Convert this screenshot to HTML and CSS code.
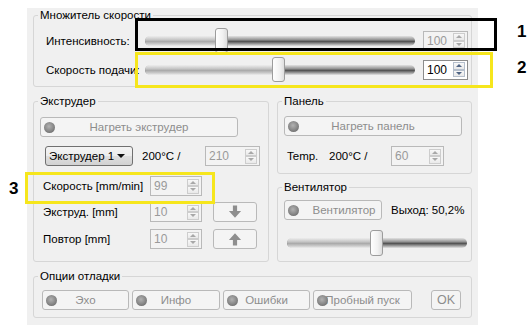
FILE: index.html
```html
<!DOCTYPE html>
<html lang="ru">
<head>
  <meta charset="UTF-8" />
  <meta name="viewport" content="width=device-width, initial-scale=1.0" />
  <title>Управление принтером</title>
  <link rel="stylesheet" href="styles.css">
</head>
<body>
  <div class="screen">
    <div class="window">
      <!-- Множитель скорости -->
      <fieldset class="group">
        <legend>Множитель скорости</legend>
        <div class="speed-body">
          <div class="speed-row">
            <span class="speed-label">Интенсивность:</span>
            <div class="slider wide">
              <div class="track"><div class="fill" style="width:75px"></div></div>
              <div class="thumb" style="left:70px"></div>
            </div>
            <div class="spin small"><span>100</span><span class="arrows"><i></i><i></i></span></div>
          </div>
          <div class="speed-row">
            <span class="speed-label">Скорость подачи:</span>
            <div class="slider wide">
              <div class="track"><div class="fill" style="width:132px"></div></div>
              <div class="thumb" style="left:127px"></div>
            </div>
            <div class="spin small on"><span>100</span><span class="arrows"><i></i><i></i></span></div>
          </div>
        </div>
      </fieldset>

      <div class="columns">
        <!-- Экструдер -->
        <fieldset class="group extruder">
          <legend>Экструдер</legend>
          <div class="ext-body">
            <div class="btn heat-ext"><span class="led"></span>Нагреть экструдер</div>
            <div class="ext-row">
              <div class="combo">Экструдер 1</div>
              <span class="temp-label">200°C /</span>
              <div class="spin w55"><span>210</span><span class="arrows"><i></i><i></i></span></div>
            </div>
            <div class="param-row first">
              <span class="param-label">Скорость [mm/min]</span>
              <div class="spin w52"><span>99</span><span class="arrows"><i></i><i></i></span></div>
            </div>
            <div class="param-row second">
              <span class="param-label">Экструд. [mm]</span>
              <div class="spin w52"><span>10</span><span class="arrows"><i></i><i></i></span></div>
              <div class="btn arrow-btn">
                <svg width="14" height="14" viewBox="0 0 12 12"><path d="M4.2 0.5h3.6v4.7h3.4L6 11 0.8 5.2h3.4z" fill="#8e8e8e"/></svg>
              </div>
            </div>
            <div class="param-row third">
              <span class="param-label">Повтор [mm]</span>
              <div class="spin w52"><span>10</span><span class="arrows"><i></i><i></i></span></div>
              <div class="btn arrow-btn">
                <svg width="14" height="14" viewBox="0 0 12 12"><path d="M4.2 11.5h3.6V6.8h3.4L6 1 0.8 6.8h3.4z" fill="#8e8e8e"/></svg>
              </div>
            </div>
          </div>
        </fieldset>

        <div class="right-col">
          <!-- Панель -->
          <fieldset class="group">
            <legend>Панель</legend>
            <div class="panel-body">
              <div class="btn heat-panel"><span class="led"></span>Нагреть панель</div>
              <div class="panel-row">
                <span class="temp-name">Temp.</span>
                <span class="temp-value">200°C /</span>
                <div class="spin w53"><span>60</span><span class="arrows"><i></i><i></i></span></div>
              </div>
            </div>
          </fieldset>

          <!-- Вентилятор -->
          <fieldset class="group fan">
            <legend>Вентилятор</legend>
            <div class="fan-body">
              <div class="fan-row">
                <div class="btn fan-btn"><span class="led"></span>Вентилятор</div>
                <span class="fan-out">Выход: 50,2%</span>
              </div>
              <div class="slider narrow">
                <div class="track"><div class="fill" style="width:88px"></div></div>
                <div class="thumb tall" style="left:83px"></div>
              </div>
            </div>
          </fieldset>
        </div>
      </div>

      <!-- Опции отладки -->
      <fieldset class="group debug">
        <legend>Опции отладки</legend>
        <div class="debug-body">
          <div class="btn w87"><span class="led"></span>Эхо</div>
          <div class="btn w88"><span class="led"></span>Инфо</div>
          <div class="btn w87"><span class="led"></span>Ошибки</div>
          <div class="btn w99"><span class="led"></span>Пробный пуск</div>
          <div class="btn ok">OK</div>
        </div>
      </fieldset>
    </div>

    <!-- пометки поверх скриншота -->
    <div class="mark black-box"></div>
    <div class="mark yellow-box two"></div>
    <div class="mark yellow-box three"></div>
    <span class="num n1">1</span>
    <span class="num n2">2</span>
    <span class="num n3">3</span>
  </div>
</body>
</html>
```

FILE: styles.css
```css
* {
  box-sizing: border-box;
}

body {
  margin: 0;
  background: #fff;
  color: #000;
  font: 11.5px/14px "Liberation Sans", Arial, sans-serif;
}

.screen {
  position: relative;
  width: 532px;
  height: 325px;
  padding: 8px 0 0 27px;
  overflow: hidden;
}

.window {
  width: 451px;
  height: 317px;
  padding: 0 6px;
  background: #f0f0f0;
}

/* group boxes */
.group {
  margin: 0;
  padding: 0;
  min-width: 0;
  border: 1px solid #d6d6d6;
  border-radius: 3px;
}

.group legend {
  margin-left: 4px;
  padding: 0 2px;
  line-height: 14px;
}

/* speed multiplier */
.speed-body {
  padding: 4px 3px 2px 12px;
}

.speed-row {
  display: flex;
  align-items: center;
  height: 29px;
}

.speed-label {
  width: 99px;
  white-space: nowrap;
}

.speed-row .spin {
  margin-left: 8px;
}

/* sliders */
.slider {
  position: relative;
  display: flex;
  align-items: center;
  height: 29px;
}

.slider.wide {
  width: 270px;
}

.slider.narrow {
  width: 180px;
  height: 26px;
  margin: 10px 0 0 9px;
}

.track {
  width: 100%;
  height: 10px;
  border-radius: 5px;
  overflow: hidden;
  background: linear-gradient(#e2e2e2, #999 35%, #555 55%, #a2a2a2 80%, #e4e4e4);
}

.track .fill {
  height: 100%;
  background: linear-gradient(#ededed, #c8c8c8 35%, #ababab 55%, #cbcbcb 80%, #ededed);
}

.thumb {
  position: absolute;
  top: 2px;
  width: 13px;
  height: 25px;
  border: 1px solid #9c9c9c;
  border-radius: 3px;
  background: linear-gradient(90deg, #fefefe, #f1f1f1 60%, #dedede);
}

.thumb.tall {
  top: 0;
  height: 26px;
}

/* spin boxes */
.spin {
  display: flex;
  align-items: center;
  justify-content: space-between;
  height: 20px;
  padding: 0 2px 0 3px;
  border: 1px solid #b9b9b9;
  background: #f3f3f3;
  color: #9a9a9a;
  font-size: 12px;
}

.spin.on {
  border-color: #8c8c8c;
  background: #fff;
  color: #000;
}

.spin.small { width: 45px; }
.spin.w52 { width: 52px; }
.spin.w53 { width: 53px; }
.spin.w55 { width: 55px; }

.spin .arrows {
  display: flex;
  flex-direction: column;
  width: 12px;
  height: 15px;
}

.spin .arrows i {
  flex: 1;
  display: flex;
  align-items: center;
  justify-content: center;
  border: 1px solid #cdcdcd;
  background: linear-gradient(#f8f8f8, #e9e9e9);
}

.spin .arrows i::before {
  content: "";
  border-left: 3px solid transparent;
  border-right: 3px solid transparent;
  border-bottom: 3px solid #a8a8a8;
}

.spin .arrows i + i::before {
  border-bottom: 0;
  border-top: 3px solid #a8a8a8;
}

.spin.on .arrows i {
  border-color: #b5bfcc;
}

.spin.on .arrows i::before {
  border-bottom-color: #4f6484;
}

.spin.on .arrows i + i::before {
  border-top-color: #4f6484;
}

/* buttons */
.btn {
  position: relative;
  display: flex;
  align-items: center;
  justify-content: center;
  height: 20px;
  border: 1px solid #b9b9b9;
  border-radius: 3px;
  background: #f4f4f4;
  color: #8d8d8d;
  white-space: nowrap;
}

.led {
  position: absolute;
  left: 3px;
  top: 50%;
  width: 11px;
  height: 11px;
  margin-top: -5.5px;
  border-radius: 50%;
  background: radial-gradient(circle at 45% 40%, #b2b2b2, #8a8a8a 50%, #5c5c5c 100%);
}

/* columns */
.columns {
  display: flex;
  gap: 8px;
  margin-top: 7px;
}

.extruder {
  width: 236px;
}

.right-col {
  width: 195px;
}

/* extruder */
.ext-body {
  padding: 9px 0 12px;
}

.heat-ext {
  width: 198px;
  margin-left: 6px;
}

.ext-row {
  display: flex;
  align-items: center;
  height: 20px;
  margin-top: 9px;
}

.combo {
  display: flex;
  align-items: center;
  justify-content: space-between;
  width: 88px;
  height: 20px;
  margin-left: 11px;
  padding: 0 7px 0 3px;
  border: 1px solid #707070;
  border-radius: 3px;
  background: linear-gradient(#f4f4f4, #ececec 50%, #dfdfdf 51%, #d2d2d2);
}

.combo::after {
  content: "";
  border-left: 4px solid transparent;
  border-right: 4px solid transparent;
  border-top: 4px solid #111;
}

.temp-label {
  width: 63px;
  margin-left: 9px;
}

.param-row {
  display: flex;
  align-items: center;
  height: 20px;
}

.param-row.first { margin-top: 10px; }
.param-row.second { margin-top: 6px; }
.param-row.third { margin-top: 7px; }

.param-label {
  width: 107px;
  margin-left: 9px;
  white-space: nowrap;
}

.arrow-btn {
  width: 44px;
  margin-left: 11px;
}

/* panel */
.panel-body {
  padding: 8px 0 7px;
}

.heat-panel {
  width: 178px;
  margin-left: 6px;
}

.panel-row {
  display: flex;
  align-items: center;
  height: 20px;
  margin-top: 10px;
}

.temp-name {
  width: 42px;
  margin-left: 9px;
}

.temp-value {
  width: 62px;
}

/* fan */
.fan {
  margin-top: 6px;
}

.fan-body {
  padding: 6px 0 5px;
}

.fan-row {
  display: flex;
  align-items: center;
  height: 20px;
}

.fan-btn {
  width: 98px;
  margin-left: 6px;
  padding-left: 22px;
}

.fan-out {
  margin-left: 9px;
  white-space: nowrap;
}

/* debug */
.debug {
  margin-top: 7px;
}

.debug-body {
  display: flex;
  gap: 3px;
  padding: 7px 0 7px 8px;
}

.w87 { width: 87px; }
.w88 { width: 88px; }
.w99 { width: 99px; }

.ok {
  width: 30px;
  margin-left: 16px;
  font-size: 12.5px;
}

/* annotation marks */
.mark {
  position: absolute;
  border: 3px solid #000;
}

.black-box {
  left: 135px;
  top: 18px;
  width: 362px;
  height: 33px;
}

.yellow-box {
  border-color: #f6e61c;
}

.yellow-box.two {
  left: 135px;
  top: 52px;
  width: 358px;
  height: 36px;
}

.yellow-box.three {
  left: 25px;
  top: 172px;
  width: 190px;
  height: 32px;
}

.num {
  position: absolute;
  font: bold 17px/20px "Liberation Sans", Arial, sans-serif;
}

.n1 { left: 517px; top: 22px; }
.n2 { left: 517px; top: 58px; }
.n3 { left: 9px; top: 179px; }
```
